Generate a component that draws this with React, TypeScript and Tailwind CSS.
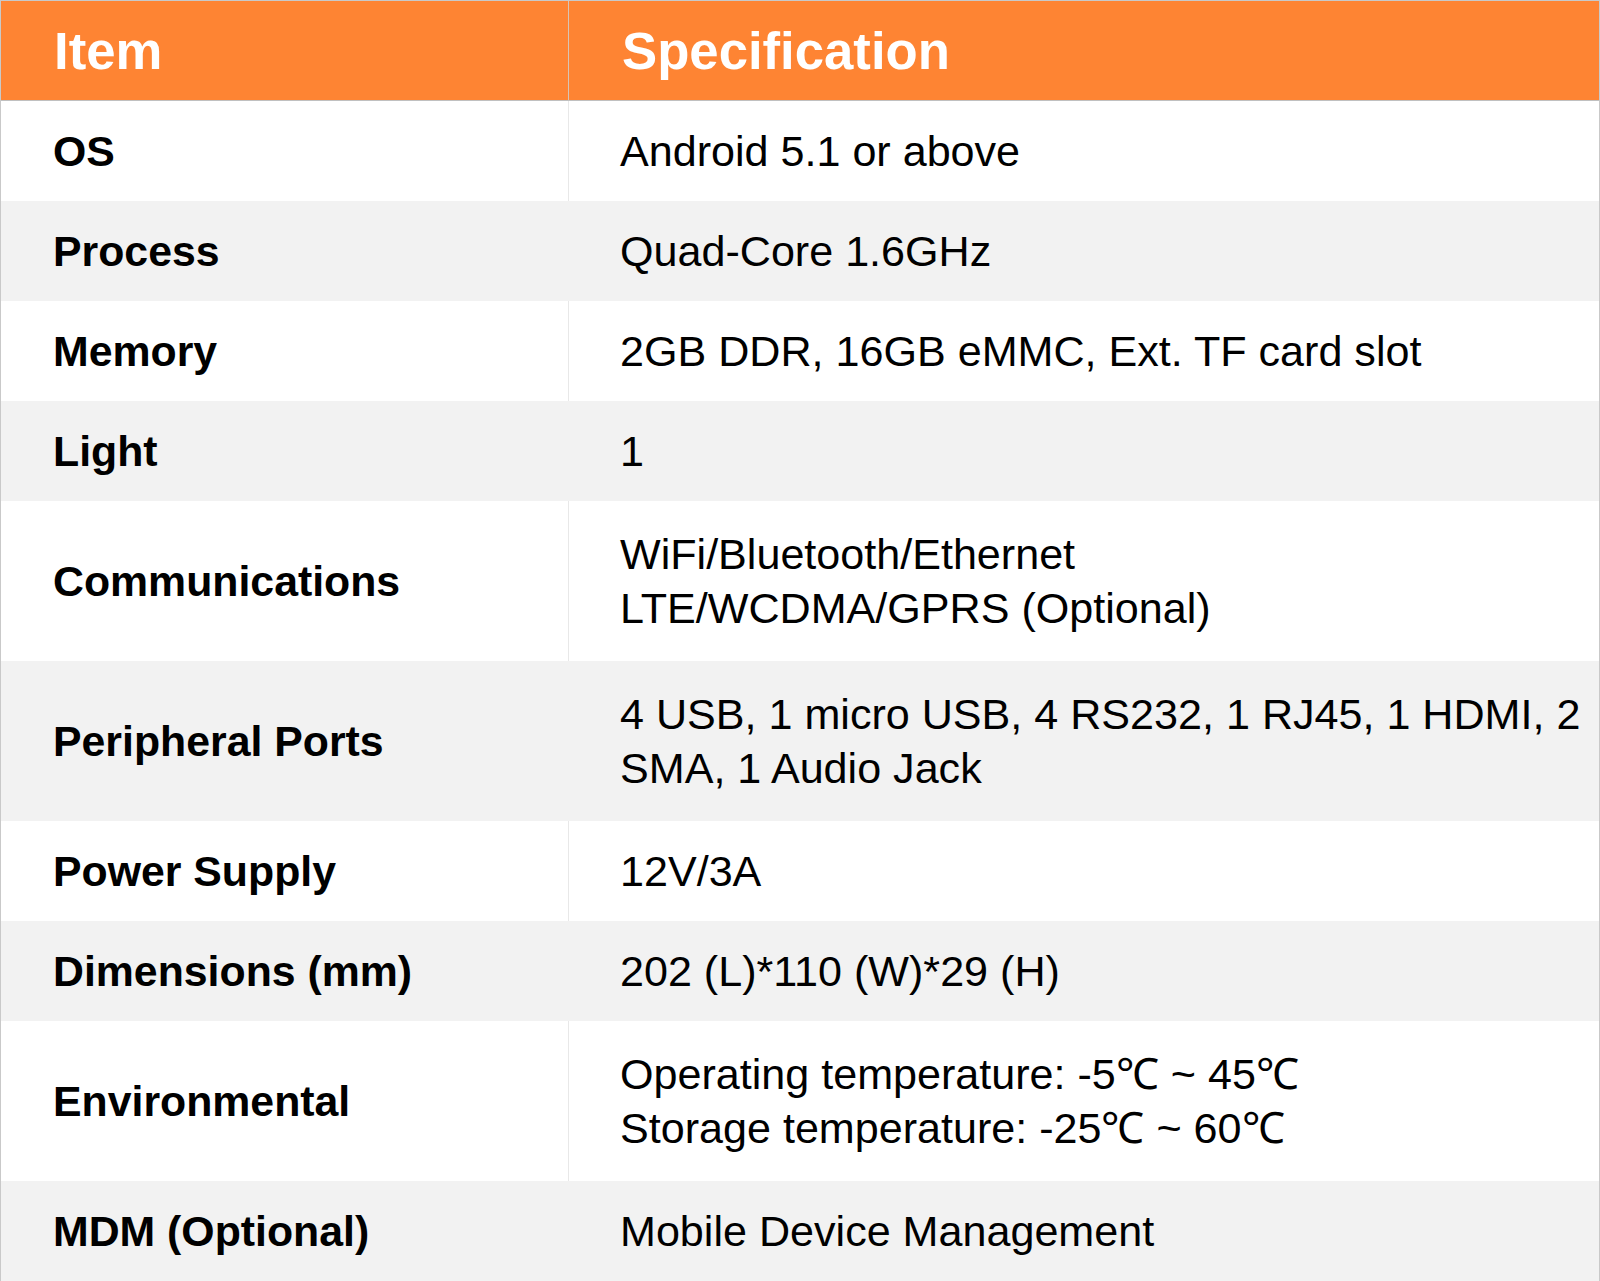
import React from "react";

type Row = { item: string; spec: string[]; tall?: boolean; gray?: boolean };

const rows: Row[] = [
  { item: "OS", spec: ["Android 5.1 or above"] },
  { item: "Process", spec: ["Quad-Core 1.6GHz"], gray: true },
  { item: "Memory", spec: ["2GB DDR, 16GB eMMC, Ext. TF card slot"] },
  { item: "Light", spec: ["1"], gray: true },
  { item: "Communications", spec: ["WiFi/Bluetooth/Ethernet", "LTE/WCDMA/GPRS (Optional)"], tall: true },
  { item: "Peripheral Ports", spec: ["4 USB, 1 micro USB, 4 RS232, 1 RJ45, 1 HDMI, 2", "SMA, 1 Audio Jack"], tall: true, gray: true },
  { item: "Power Supply", spec: ["12V/3A"] },
  { item: "Dimensions (mm)", spec: ["202 (L)*110 (W)*29 (H)"], gray: true },
  { item: "Environmental", spec: ["Operating temperature: -5\u2103 ~ 45\u2103", "Storage temperature: -25\u2103 ~ 60\u2103"], tall: true },
  { item: "MDM (Optional)", spec: ["Mobile Device Management"], gray: true },
];

export default function App() {
  return (
    <div
      className="w-[1600px] h-[1281px] bg-white text-black overflow-hidden"
      style={{ fontFamily: '"Liberation Sans", Arial, sans-serif' }}
    >
      <div className="border-t border-l border-r border-[#c9c9c9]">
        <div className="grid grid-cols-[568px_1fr] h-[100px] bg-[#fe8433] border-b border-[#c0c0c0] text-white font-bold text-[52.7px]">
          <div className="flex items-center pl-[53px] border-r border-[#d9c4b4]">Item</div>
          <div className="flex items-center pl-[53px]">Specification</div>
        </div>
        {rows.map((r) => (
          <div
            key={r.item}
            className={
              "grid grid-cols-[568px_1fr] " +
              (r.tall ? "h-[160px] " : "h-[100px] ") +
              (r.gray ? "bg-[#f2f2f2]" : "bg-white")
            }
          >
            <div
              className={
                "flex items-center pl-[52px] font-bold text-[42.8px] " +
                (r.gray ? "border-r border-[#f2f2f2]" : "border-r border-[#e8e8e8]")
              }
            >
              {r.item}
            </div>
            <div className="flex flex-col justify-center pl-[51px] text-[43.1px] leading-[54px]">
              {r.spec.map((s) => (
                <div key={s} className="whitespace-nowrap">{s}</div>
              ))}
            </div>
          </div>
        ))}
      </div>
    </div>
  );
}
